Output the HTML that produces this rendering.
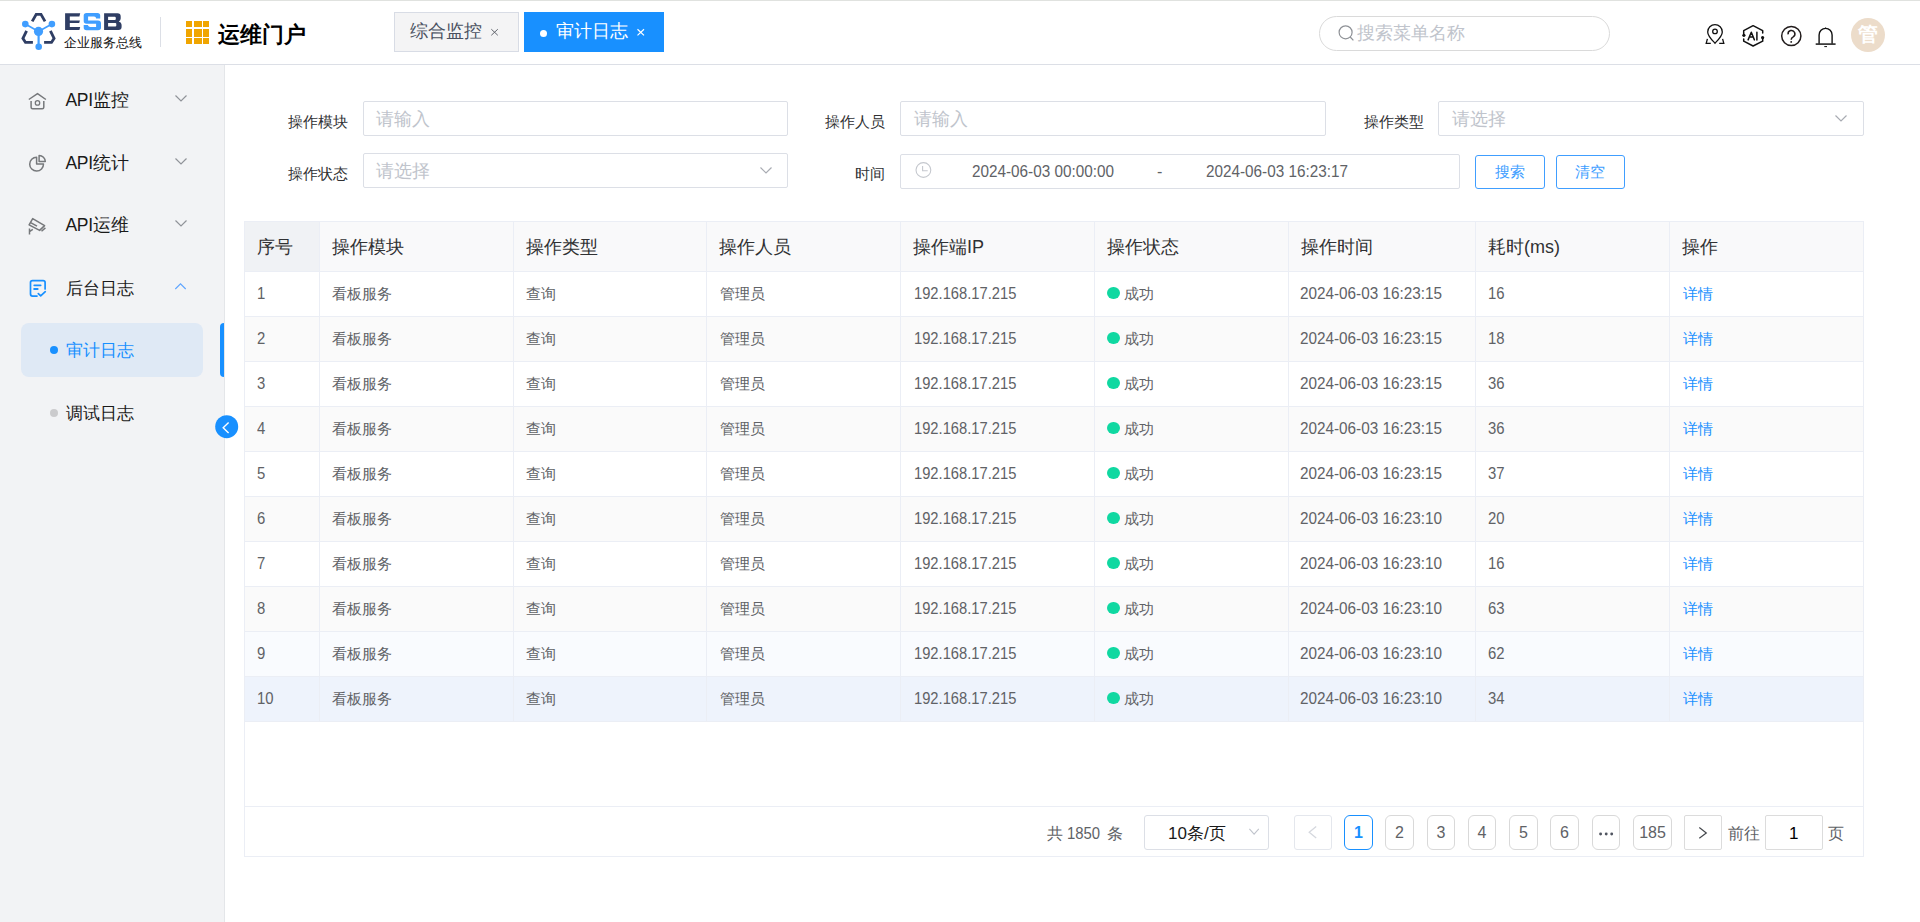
<!DOCTYPE html><html><head><meta charset="utf-8"><style>
*{box-sizing:border-box;margin:0;padding:0}
html,body{width:1920px;height:922px;overflow:hidden;background:#fff;font-family:"Liberation Sans",sans-serif;color:#303133}
.a{position:absolute}
.t{position:absolute;white-space:nowrap;line-height:1}
#hdr{position:absolute;left:0;top:0;width:1920px;height:65px;background:#fff;border-top:1px solid #e0e2df;border-bottom:1px solid #dcdfe6}
#side{position:absolute;left:0;top:65px;width:225px;height:857px;background:#f2f3f5;border-right:1px solid #e4e6e9}
.tab{position:absolute;top:12px;height:40px}
.inp{position:absolute;border:1px solid #dcdfe6;border-radius:2px;background:#fff}
.ph{color:#c0c4cc;font-size:18px}
.lbl{font-size:15px;color:#303133}
.cell{position:absolute;white-space:nowrap;line-height:1;font-size:15px;color:#606266}
.hcell{position:absolute;white-space:nowrap;line-height:1;font-size:18px;color:#303133}
.num{font-size:16px;transform-origin:0 0}
.pg{position:absolute;top:815px;height:35px;border:1px solid #dcdfe6;border-radius:4px;background:#fff;font-size:16px;color:#606266;text-align:center;line-height:33px}
</style></head><body>
<div id="hdr"></div>
<svg class="a" style="left:0px;top:0px" width="130" height="60" viewBox="0 0 130 60">
<g fill="none" stroke="#2f3e64" stroke-width="2.8" stroke-linejoin="miter" stroke-linecap="butt">
<polyline points="32.2,21.4 36.2,14.4 41,14.4 45,21.4"/>
<polyline points="26.6,30.8 22.9,38.3 25.5,42.4 32.9,42.4"/>
<polyline points="50.4,30.8 54.1,38.3 51.5,42.4 44.1,42.4"/>
</g>
<g stroke="#409eff" stroke-width="1.7"><line x1="25.3" y1="24.1" x2="38.5" y2="31.4"/><line x1="51.9" y1="24.1" x2="38.5" y2="31.4"/></g>
<line x1="38.6" y1="31.4" x2="38.6" y2="46.6" stroke="#409eff" stroke-width="2.2"/>
<g fill="#409eff"><circle cx="25.3" cy="24.1" r="3.3"/><circle cx="51.9" cy="24.1" r="3.3"/><circle cx="38.5" cy="31.4" r="4.6"/><circle cx="38.7" cy="46.7" r="3.3"/></g>
<path fill="#2f3e64" d="M65.1,13.3 L80.2,13.3 L79.4,16.6 L69.8,16.6 L69.8,20.4 L79.9,20.4 L79.2,22.9 L69.8,22.9 L69.8,27 L80.2,27 L79.4,29.9 L65.1,29.9 Z"/>
<path fill="#409eff" d="M86.5,12.9 L97.5,12.9 Q100.2,12.9 100.2,15.5 L100.2,18.6 L96.1,18.6 Q96.1,16.6 94,16.6 L88.1,16.6 L88.1,20.4 L98,20.4 Q101,20.4 101,23.5 L101,27.5 Q101,30.2 98,30.2 L86.5,30.2 Q83.7,30.2 83.7,27.5 L83.7,25.1 L87.8,25.1 Q88.3,26.9 90,26.9 L96.1,26.9 L96.1,23.7 L86.5,23.7 Q83.7,23.7 83.7,21 L83.7,15.5 Q83.7,12.9 86.5,12.9 Z"/>
<path fill="#2f3e64" fill-rule="evenodd" d="M104.1,13.3 L117.5,13.3 Q120.7,13.3 120.7,16.5 L120.7,18.5 Q120.7,20.5 118.8,21.4 Q121.6,22.3 121.6,24.8 L121.6,26.9 Q121.6,29.9 118.5,29.9 L104.1,29.9 Z M108.1,16.75 L114.8,16.75 Q115.8,16.75 115.8,17.9 L115.8,18.9 Q115.8,20 114.8,20 L108.1,20 Z M108.1,22.95 L115.3,22.95 Q116.3,22.95 116.3,24.1 L116.3,25.5 Q116.3,26.6 115.3,26.6 L108.1,26.6 Z"/>
</svg>
<div class="t" style="left:64px;top:35.5px;font-size:13.2px;font-weight:500;color:#111">企业服务总线</div>
<div class="a" style="left:160px;top:17px;width:1px;height:30px;background:#dcdfe6"></div>
<div class="a" style="left:186px;top:21px;width:6px;height:6px;background:#f0a500"></div>
<div class="a" style="left:186px;top:29px;width:6px;height:7.5px;background:#f0a500"></div>
<div class="a" style="left:186px;top:38px;width:6px;height:6px;background:#f0a500"></div>
<div class="a" style="left:194px;top:21px;width:8px;height:6px;background:#f0a500"></div>
<div class="a" style="left:194px;top:29px;width:8px;height:7.5px;background:#f0a500"></div>
<div class="a" style="left:194px;top:38px;width:8px;height:6px;background:#f0a500"></div>
<div class="a" style="left:203px;top:21px;width:6px;height:6px;background:#f0a500"></div>
<div class="a" style="left:203px;top:29px;width:6px;height:7.5px;background:#f0a500"></div>
<div class="a" style="left:203px;top:38px;width:6px;height:6px;background:#f0a500"></div>
<div class="t" style="left:218px;top:23.5px;font-size:22.3px;font-weight:bold;color:#000">运维门户</div>
<div class="tab" style="left:394px;width:125px;background:#f4f4f5;border:1px solid #d8dce5"></div>
<div class="t" style="left:410px;top:22.5px;font-size:17.5px;color:#495060">综合监控</div>
<svg class="a" style="left:488px;top:26px" width="14" height="12" viewBox="488 26 14 12"><path d="M491.3,29.2 L497.8,35.3 M497.8,29.2 L491.3,35.3" stroke="#5a5e66" stroke-width="0.95"/></svg>
<div class="tab" style="left:524px;width:140px;background:#1890ff"></div>
<div class="a" style="left:539.7px;top:29.6px;width:7.6px;height:7.6px;border-radius:50%;background:#fff"></div>
<div class="t" style="left:556px;top:22.5px;font-size:17.5px;color:#fff">审计日志</div>
<svg class="a" style="left:634px;top:26px" width="14" height="12" viewBox="634 26 14 12"><path d="M637.5,29.2 L644,35.4 M644,29.2 L637.5,35.4" stroke="#fff" stroke-width="1.2"/></svg>
<div class="a" style="left:1319px;top:16px;width:291px;height:35px;border:1px solid #dadada;border-radius:18px"></div>
<svg class="a" style="left:1336px;top:23px" width="20" height="20" viewBox="1336 23 20 20"><circle cx="1345.6" cy="32.3" r="6.5" fill="none" stroke="#8e9196" stroke-width="1.2"/><line x1="1350.2" y1="37" x2="1353.4" y2="40.4" stroke="#8e9196" stroke-width="1.2"/></svg>
<div class="t" style="left:1357px;top:24.5px;font-size:17.5px;color:#c0c4cc">搜索菜单名称</div>
<svg class="a" style="left:1700px;top:20px" width="140" height="32" viewBox="1700 20 140 32">
<g fill="none" stroke="#111" stroke-width="1.3">
<path d="M1715,43.2 C1711.5,39.5 1707.7,35.8 1707.7,31.9 A7.3,7.3 0 0 1 1722.3,31.9 C1722.3,35.8 1718.5,39.5 1715,43.2 Z"/>
<circle cx="1715" cy="31.4" r="2.3"/>
<polyline points="1707.4,38.9 1706.2,43.3 1710.8,43.3"/><polyline points="1722.6,38.9 1723.8,43.3 1719.2,43.3"/>
</g>
<g fill="none" stroke="#111" stroke-width="1.5" stroke-linejoin="round" stroke-linecap="round">
<path d="M1743.7,34.3 L1743.7,30.7 L1753.1,25.7 L1762.7,30.7 L1762.7,33"/>
<path d="M1743.7,38.9 L1743.7,41.2 L1753.1,46 L1762.7,41.2 L1762.7,37.6"/>
<path d="M1748.1,39.9 L1751.3,32.3 L1754.4,39.9 M1749.3,37 L1753.3,37 M1756.9,32.2 L1756.9,39.9"/>
</g>
<circle cx="1743.9" cy="35.3" r="1.6" fill="#111"/><circle cx="1762.6" cy="37.6" r="1.6" fill="#111"/>
<circle cx="1791.3" cy="36" r="9.6" fill="none" stroke="#221c1c" stroke-width="1.5"/>
<path d="M1788.1,34.3 A3.4,3.4 0 1 1 1793.2,36.8 C1791.7,37.6 1791.2,38.2 1791.2,39.7" fill="none" stroke="#221c1c" stroke-width="1.5"/>
<circle cx="1791.2" cy="41.9" r="0.95" fill="#221c1c"/>
<g fill="none" stroke="#111" stroke-width="1.4">
<path d="M1819.1,44 L1819.1,34.9 A6.5,6.5 0 0 1 1832.1,34.9 L1832.1,44"/>
</g>
<line x1="1815.7" y1="44.1" x2="1835.6" y2="44.1" stroke="#333" stroke-width="1.7"/>
<line x1="1824.3" y1="46.6" x2="1827" y2="46.6" stroke="#111" stroke-width="1"/>
<path d="M1824.5,28.6 L1825.6,27.3 L1826.7,28.6 Z" fill="#111"/>
</svg>
<div class="a" style="left:1851px;top:18px;width:34px;height:34px;border-radius:50%;background:#ecdcca"></div>
<div class="t" style="left:1858px;top:23.5px;font-size:20px;font-weight:900;color:#fff">管</div>
<div id="side"></div>
<div class="t" style="left:65.5px;top:91.7px;font-size:17.5px;color:#1a1a1a"><span style="letter-spacing:-0.3px">API</span>监控</div>
<div class="t" style="left:65.5px;top:154.7px;font-size:17.5px;color:#1a1a1a"><span style="letter-spacing:-0.3px">API</span>统计</div>
<div class="t" style="left:65.5px;top:216.7px;font-size:17.5px;color:#1a1a1a"><span style="letter-spacing:-0.3px">API</span>运维</div>
<div class="t" style="left:65.5px;top:279.7px;font-size:17.2px;color:#1a1a1a">后台日志</div>
<svg class="a" style="left:20px;top:84px" width="34" height="220" viewBox="20 84 34 220">
<g fill="none" stroke="#76787b" stroke-width="1.5" stroke-linejoin="round">
<path d="M28.8,99.5 L37.5,93.6 L45.9,99.5"/>
<path d="M31.1,101 L31.1,107.3 Q31.1,108.8 32.6,108.8 L42.3,108.8 Q43.8,108.8 43.8,107.3 L43.8,101"/>
<circle cx="37.5" cy="102.9" r="2.2" stroke-width="1.3"/>
<path d="M36.6,157.2 A6.9,6.9 0 1 0 43.5,164 L36.6,164 Z"/>
<path d="M39.1,155.4 L39.1,161.5 L45.3,161.5 A6.2,6.2 0 0 0 39.1,155.4 Z"/>
<path d="M32.7,218.6 L44.6,225.6 L39.6,230.4 L29.1,224.8 Z"/>
<path d="M30.6,222.6 L37,226.2"/>
<path d="M41.5,231.3 L45.4,227.9"/>
<path d="M29.5,228.4 L29.5,234.5 M29.5,231.6 L32.8,229.4"/>
</g>
<g fill="none" stroke="#1890ff" stroke-width="1.7" stroke-linecap="round" stroke-linejoin="round">
<path d="M37,296.1 L32.5,296.1 Q30.5,296.1 30.5,294.1 L30.5,282.6 Q30.5,280.6 32.5,280.6 L43.1,280.6 Q45.1,280.6 45.1,282.6 L45.1,288.9"/>
<path d="M34.2,285.3 L40.7,285.3"/>
<path d="M34.2,288.9 L37.6,288.9" stroke-width="2"/>
<path d="M38.3,293.6 L40.7,295.9 L45.3,291.7"/>
</g>
</svg>
<svg class="a" style="left:174px;top:94px" width="14" height="9" viewBox="0 0 14 9"><polyline points="1.5,1.5 7,7 12.5,1.5" fill="none" stroke="#909399" stroke-width="1.2"/></svg>
<svg class="a" style="left:174px;top:157px" width="14" height="9" viewBox="0 0 14 9"><polyline points="1.5,1.5 7,7 12.5,1.5" fill="none" stroke="#909399" stroke-width="1.2"/></svg>
<svg class="a" style="left:174px;top:219px" width="14" height="9" viewBox="0 0 14 9"><polyline points="1.5,1.5 7,7 12.5,1.5" fill="none" stroke="#909399" stroke-width="1.2"/></svg>
<svg class="a" style="left:172px;top:280px" width="16" height="12" viewBox="172 280 16 12"><polyline points="175.3,289 180.5,283.8 185.7,289" fill="none" stroke="#5ea5ff" stroke-width="1.1"/></svg>
<div class="a" style="left:21px;top:323px;width:182px;height:54px;border-radius:8px;background:#dfe9f5"></div>
<div class="a" style="left:220px;top:323px;width:4px;height:54px;border-radius:4px 0 0 4px;background:#1890ff"></div>
<div class="a" style="left:49.8px;top:345.9px;width:8.4px;height:8.4px;border-radius:50%;background:#1890ff"></div>
<div class="t" style="left:65.5px;top:341.8px;font-size:17.2px;color:#1890ff">审计日志</div>
<div class="a" style="left:49.8px;top:408.6px;width:8.4px;height:8.4px;border-radius:50%;background:#cbcbcd"></div>
<div class="t" style="left:65.5px;top:404.8px;font-size:17.2px;color:#1a1a1a">调试日志</div>
<svg class="a" style="left:214px;top:414px" width="26" height="26" viewBox="214 414 26 26"><circle cx="226.7" cy="426.7" r="11.5" fill="#1890ff"/><polyline points="228.6,422.6 223.2,427.8 228.6,432.9" fill="none" stroke="#fff" stroke-width="1.4"/></svg>
<div class="t lbl" style="left:288px;top:114px">操作模块</div>
<div class="t lbl" style="left:825px;top:114px">操作人员</div>
<div class="t lbl" style="left:1364px;top:114px">操作类型</div>
<div class="t lbl" style="left:288px;top:166px">操作状态</div>
<div class="t lbl" style="left:855px;top:166px">时间</div>
<div class="inp" style="left:363px;top:101px;width:425px;height:35px"></div>
<div class="t ph" style="left:376px;top:110px">请输入</div>
<div class="inp" style="left:900px;top:101px;width:426px;height:35px"></div>
<div class="t ph" style="left:914px;top:110px">请输入</div>
<div class="inp" style="left:1438px;top:101px;width:426px;height:35px"></div>
<div class="t ph" style="left:1452px;top:110px">请选择</div>
<svg class="a" style="left:1834px;top:114px" width="14" height="9" viewBox="0 0 14 9"><polyline points="1.5,1.5 7,7 12.5,1.5" fill="none" stroke="#a8abb2" stroke-width="1.2"/></svg>
<div class="inp" style="left:363px;top:153px;width:425px;height:35px"></div>
<div class="t ph" style="left:376px;top:162px">请选择</div>
<svg class="a" style="left:759px;top:166px" width="14" height="9" viewBox="0 0 14 9"><polyline points="1.5,1.5 7,7 12.5,1.5" fill="none" stroke="#a8abb2" stroke-width="1.2"/></svg>
<div class="inp" style="left:900px;top:154px;width:560px;height:35px"></div>
<svg class="a" style="left:912px;top:159px" width="22" height="22" viewBox="912 159 22 22"><circle cx="923.4" cy="170" r="7.4" fill="none" stroke="#c5c8ce" stroke-width="1.1"/><polyline points="922.6,166 922.6,170.8 927.7,170.8" fill="none" stroke="#c5c8ce" stroke-width="1.1"/></svg>
<div class="t num" style="left:972px;top:163.8px;color:#606266;transform:scaleX(0.955)">2024-06-03 00:00:00</div>
<div class="t num" style="left:1157px;top:163.8px;color:#606266">-</div>
<div class="t num" style="left:1206px;top:163.8px;color:#606266;transform:scaleX(0.955)">2024-06-03 16:23:17</div>
<div class="a" style="left:1475px;top:155px;width:70px;height:34px;border:1px solid #409eff;border-radius:3px"></div>
<div class="t" style="left:1495px;top:164px;font-size:15px;color:#409eff">搜索</div>
<div class="a" style="left:1556px;top:155px;width:69px;height:34px;border:1px solid #409eff;border-radius:3px"></div>
<div class="t" style="left:1575px;top:164px;font-size:15px;color:#409eff">清空</div>
<div class="a" style="left:244px;top:221px;width:1620px;height:636px;border:1px solid #ebeef5;background:#fff"></div>
<div class="a" style="left:245px;top:222px;width:1618px;height:49px;background:#f9f9fa"></div>
<div class="a" style="left:245px;top:222px;width:74px;height:49px;background:#f0f2f5"></div>
<div class="a" style="left:245px;top:271px;width:1618px;height:45px;background:#fff;border-top:1px solid #ebeef5"></div>
<div class="a" style="left:245px;top:316px;width:1618px;height:45px;background:#fafafa;border-top:1px solid #ebeef5"></div>
<div class="a" style="left:245px;top:361px;width:1618px;height:45px;background:#fff;border-top:1px solid #ebeef5"></div>
<div class="a" style="left:245px;top:406px;width:1618px;height:45px;background:#fafafa;border-top:1px solid #ebeef5"></div>
<div class="a" style="left:245px;top:451px;width:1618px;height:45px;background:#fff;border-top:1px solid #ebeef5"></div>
<div class="a" style="left:245px;top:496px;width:1618px;height:45px;background:#fafafa;border-top:1px solid #ebeef5"></div>
<div class="a" style="left:245px;top:541px;width:1618px;height:45px;background:#fff;border-top:1px solid #ebeef5"></div>
<div class="a" style="left:245px;top:586px;width:1618px;height:45px;background:#fafafa;border-top:1px solid #ebeef5"></div>
<div class="a" style="left:245px;top:631px;width:1618px;height:45px;background:#f9fbfe;border-top:1px solid #ebeef5"></div>
<div class="a" style="left:245px;top:676px;width:1618px;height:45px;background:#eef3fc;border-top:1px solid #ebeef5"></div>
<div class="a" style="left:245px;top:721px;width:1618px;height:1px;background:#ebeef5"></div>
<div class="a" style="left:319px;top:222px;width:1px;height:499px;background:#ebeef5"></div>
<div class="a" style="left:513px;top:222px;width:1px;height:499px;background:#ebeef5"></div>
<div class="a" style="left:706px;top:222px;width:1px;height:499px;background:#ebeef5"></div>
<div class="a" style="left:900px;top:222px;width:1px;height:499px;background:#ebeef5"></div>
<div class="a" style="left:1094px;top:222px;width:1px;height:499px;background:#ebeef5"></div>
<div class="a" style="left:1288px;top:222px;width:1px;height:499px;background:#ebeef5"></div>
<div class="a" style="left:1475px;top:222px;width:1px;height:499px;background:#ebeef5"></div>
<div class="a" style="left:1669px;top:222px;width:1px;height:499px;background:#ebeef5"></div>
<div class="a" style="left:245px;top:806px;width:1618px;height:1px;background:#ebeef5"></div>
<div class="hcell" style="left:257px;top:238px">序号</div>
<div class="hcell" style="left:332px;top:238px">操作模块</div>
<div class="hcell" style="left:526px;top:238px">操作类型</div>
<div class="hcell" style="left:719px;top:238px">操作人员</div>
<div class="hcell" style="left:913px;top:238px">操作端IP</div>
<div class="hcell" style="left:1107px;top:238px">操作状态</div>
<div class="hcell" style="left:1301px;top:238px">操作时间</div>
<div class="hcell" style="left:1488px;top:238px">耗时(ms)</div>
<div class="hcell" style="left:1682px;top:238px">操作</div>
<div class="cell num" style="left:257px;top:285.7px;transform:scaleX(0.93)">1</div>
<div class="cell" style="left:332px;top:285.7px">看板服务</div>
<div class="cell" style="left:526px;top:285.7px">查询</div>
<div class="cell" style="left:720px;top:285.7px">管理员</div>
<div class="cell num" style="left:914px;top:285.7px;transform:scaleX(0.92)">192.168.17.215</div>
<div class="a" style="left:1107px;top:286.7px;width:13px;height:12.5px;border-radius:50%;background:#10d8a1"></div>
<div class="cell" style="left:1124px;top:285.7px">成功</div>
<div class="cell num" style="left:1300px;top:285.7px;transform:scaleX(0.955)">2024-06-03 16:23:15</div>
<div class="cell num" style="left:1488px;top:285.7px;transform:scaleX(0.93)">16</div>
<div class="cell" style="left:1683px;top:285.7px;color:#1890ff">详情</div>
<div class="cell num" style="left:257px;top:330.7px;transform:scaleX(0.93)">2</div>
<div class="cell" style="left:332px;top:330.7px">看板服务</div>
<div class="cell" style="left:526px;top:330.7px">查询</div>
<div class="cell" style="left:720px;top:330.7px">管理员</div>
<div class="cell num" style="left:914px;top:330.7px;transform:scaleX(0.92)">192.168.17.215</div>
<div class="a" style="left:1107px;top:331.7px;width:13px;height:12.5px;border-radius:50%;background:#10d8a1"></div>
<div class="cell" style="left:1124px;top:330.7px">成功</div>
<div class="cell num" style="left:1300px;top:330.7px;transform:scaleX(0.955)">2024-06-03 16:23:15</div>
<div class="cell num" style="left:1488px;top:330.7px;transform:scaleX(0.93)">18</div>
<div class="cell" style="left:1683px;top:330.7px;color:#1890ff">详情</div>
<div class="cell num" style="left:257px;top:375.7px;transform:scaleX(0.93)">3</div>
<div class="cell" style="left:332px;top:375.7px">看板服务</div>
<div class="cell" style="left:526px;top:375.7px">查询</div>
<div class="cell" style="left:720px;top:375.7px">管理员</div>
<div class="cell num" style="left:914px;top:375.7px;transform:scaleX(0.92)">192.168.17.215</div>
<div class="a" style="left:1107px;top:376.7px;width:13px;height:12.5px;border-radius:50%;background:#10d8a1"></div>
<div class="cell" style="left:1124px;top:375.7px">成功</div>
<div class="cell num" style="left:1300px;top:375.7px;transform:scaleX(0.955)">2024-06-03 16:23:15</div>
<div class="cell num" style="left:1488px;top:375.7px;transform:scaleX(0.93)">36</div>
<div class="cell" style="left:1683px;top:375.7px;color:#1890ff">详情</div>
<div class="cell num" style="left:257px;top:420.7px;transform:scaleX(0.93)">4</div>
<div class="cell" style="left:332px;top:420.7px">看板服务</div>
<div class="cell" style="left:526px;top:420.7px">查询</div>
<div class="cell" style="left:720px;top:420.7px">管理员</div>
<div class="cell num" style="left:914px;top:420.7px;transform:scaleX(0.92)">192.168.17.215</div>
<div class="a" style="left:1107px;top:421.7px;width:13px;height:12.5px;border-radius:50%;background:#10d8a1"></div>
<div class="cell" style="left:1124px;top:420.7px">成功</div>
<div class="cell num" style="left:1300px;top:420.7px;transform:scaleX(0.955)">2024-06-03 16:23:15</div>
<div class="cell num" style="left:1488px;top:420.7px;transform:scaleX(0.93)">36</div>
<div class="cell" style="left:1683px;top:420.7px;color:#1890ff">详情</div>
<div class="cell num" style="left:257px;top:465.7px;transform:scaleX(0.93)">5</div>
<div class="cell" style="left:332px;top:465.7px">看板服务</div>
<div class="cell" style="left:526px;top:465.7px">查询</div>
<div class="cell" style="left:720px;top:465.7px">管理员</div>
<div class="cell num" style="left:914px;top:465.7px;transform:scaleX(0.92)">192.168.17.215</div>
<div class="a" style="left:1107px;top:466.7px;width:13px;height:12.5px;border-radius:50%;background:#10d8a1"></div>
<div class="cell" style="left:1124px;top:465.7px">成功</div>
<div class="cell num" style="left:1300px;top:465.7px;transform:scaleX(0.955)">2024-06-03 16:23:15</div>
<div class="cell num" style="left:1488px;top:465.7px;transform:scaleX(0.93)">37</div>
<div class="cell" style="left:1683px;top:465.7px;color:#1890ff">详情</div>
<div class="cell num" style="left:257px;top:510.7px;transform:scaleX(0.93)">6</div>
<div class="cell" style="left:332px;top:510.7px">看板服务</div>
<div class="cell" style="left:526px;top:510.7px">查询</div>
<div class="cell" style="left:720px;top:510.7px">管理员</div>
<div class="cell num" style="left:914px;top:510.7px;transform:scaleX(0.92)">192.168.17.215</div>
<div class="a" style="left:1107px;top:511.7px;width:13px;height:12.5px;border-radius:50%;background:#10d8a1"></div>
<div class="cell" style="left:1124px;top:510.7px">成功</div>
<div class="cell num" style="left:1300px;top:510.7px;transform:scaleX(0.955)">2024-06-03 16:23:10</div>
<div class="cell num" style="left:1488px;top:510.7px;transform:scaleX(0.93)">20</div>
<div class="cell" style="left:1683px;top:510.7px;color:#1890ff">详情</div>
<div class="cell num" style="left:257px;top:555.7px;transform:scaleX(0.93)">7</div>
<div class="cell" style="left:332px;top:555.7px">看板服务</div>
<div class="cell" style="left:526px;top:555.7px">查询</div>
<div class="cell" style="left:720px;top:555.7px">管理员</div>
<div class="cell num" style="left:914px;top:555.7px;transform:scaleX(0.92)">192.168.17.215</div>
<div class="a" style="left:1107px;top:556.7px;width:13px;height:12.5px;border-radius:50%;background:#10d8a1"></div>
<div class="cell" style="left:1124px;top:555.7px">成功</div>
<div class="cell num" style="left:1300px;top:555.7px;transform:scaleX(0.955)">2024-06-03 16:23:10</div>
<div class="cell num" style="left:1488px;top:555.7px;transform:scaleX(0.93)">16</div>
<div class="cell" style="left:1683px;top:555.7px;color:#1890ff">详情</div>
<div class="cell num" style="left:257px;top:600.7px;transform:scaleX(0.93)">8</div>
<div class="cell" style="left:332px;top:600.7px">看板服务</div>
<div class="cell" style="left:526px;top:600.7px">查询</div>
<div class="cell" style="left:720px;top:600.7px">管理员</div>
<div class="cell num" style="left:914px;top:600.7px;transform:scaleX(0.92)">192.168.17.215</div>
<div class="a" style="left:1107px;top:601.7px;width:13px;height:12.5px;border-radius:50%;background:#10d8a1"></div>
<div class="cell" style="left:1124px;top:600.7px">成功</div>
<div class="cell num" style="left:1300px;top:600.7px;transform:scaleX(0.955)">2024-06-03 16:23:10</div>
<div class="cell num" style="left:1488px;top:600.7px;transform:scaleX(0.93)">63</div>
<div class="cell" style="left:1683px;top:600.7px;color:#1890ff">详情</div>
<div class="cell num" style="left:257px;top:645.7px;transform:scaleX(0.93)">9</div>
<div class="cell" style="left:332px;top:645.7px">看板服务</div>
<div class="cell" style="left:526px;top:645.7px">查询</div>
<div class="cell" style="left:720px;top:645.7px">管理员</div>
<div class="cell num" style="left:914px;top:645.7px;transform:scaleX(0.92)">192.168.17.215</div>
<div class="a" style="left:1107px;top:646.7px;width:13px;height:12.5px;border-radius:50%;background:#10d8a1"></div>
<div class="cell" style="left:1124px;top:645.7px">成功</div>
<div class="cell num" style="left:1300px;top:645.7px;transform:scaleX(0.955)">2024-06-03 16:23:10</div>
<div class="cell num" style="left:1488px;top:645.7px;transform:scaleX(0.93)">62</div>
<div class="cell" style="left:1683px;top:645.7px;color:#1890ff">详情</div>
<div class="cell num" style="left:257px;top:690.7px;transform:scaleX(0.93)">10</div>
<div class="cell" style="left:332px;top:690.7px">看板服务</div>
<div class="cell" style="left:526px;top:690.7px">查询</div>
<div class="cell" style="left:720px;top:690.7px">管理员</div>
<div class="cell num" style="left:914px;top:690.7px;transform:scaleX(0.92)">192.168.17.215</div>
<div class="a" style="left:1107px;top:691.7px;width:13px;height:12.5px;border-radius:50%;background:#10d8a1"></div>
<div class="cell" style="left:1124px;top:690.7px">成功</div>
<div class="cell num" style="left:1300px;top:690.7px;transform:scaleX(0.955)">2024-06-03 16:23:10</div>
<div class="cell num" style="left:1488px;top:690.7px;transform:scaleX(0.93)">34</div>
<div class="cell" style="left:1683px;top:690.7px;color:#1890ff">详情</div>
<div class="t" style="left:1047px;top:826px;font-size:16px;color:#606266">共 <span class="num" style="display:inline-block;transform:scaleX(0.93)">1850</span> 条</div>
<div class="a" style="left:1144px;top:815px;width:125px;height:35px;border:1px solid #dcdfe6;border-radius:3px"></div>
<div class="t" style="left:1168px;top:825px;font-size:17px;color:#1a1a1a">10条/页</div>
<svg class="a" style="left:1246px;top:826px" width="16" height="12" viewBox="1246 826 16 12"><polyline points="1249.4,828.8 1254.1,834.2 1258.8,828.8" fill="none" stroke="#c0c4cc" stroke-width="1.1"/></svg>
<div class="pg" style="left:1294px;width:38px;border-color:#e4e7ed;border-radius:3px"></div>
<svg class="a" style="left:1304px;top:824px" width="16" height="18" viewBox="1304 824 16 18"><polyline points="1316.2,826.4 1309.2,832.3 1316.2,838.1" fill="none" stroke="#d5d8de" stroke-width="1.3"/></svg>
<div class="pg" style="left:1344px;width:29px;border-color:#1890ff;color:#1890ff;font-weight:bold;border-radius:6px">1</div>
<div class="pg" style="left:1385px;width:29px;border-color:#d9d9d9;border-radius:6px"><span class="num" style="display:inline-block">2</span></div>
<div class="pg" style="left:1427px;width:28px;border-color:#d9d9d9;border-radius:6px"><span class="num" style="display:inline-block">3</span></div>
<div class="pg" style="left:1468px;width:28px;border-color:#d9d9d9;border-radius:6px"><span class="num" style="display:inline-block">4</span></div>
<div class="pg" style="left:1509px;width:29px;border-color:#d9d9d9;border-radius:6px"><span class="num" style="display:inline-block">5</span></div>
<div class="pg" style="left:1550px;width:29px;border-color:#d9d9d9;border-radius:6px"><span class="num" style="display:inline-block">6</span></div>
<div class="pg" style="left:1592px;width:28px;border-color:#d9d9d9;border-radius:6px"></div>
<svg class="a" style="left:1596px;top:830px" width="20" height="8" viewBox="1596 830 20 8"><g fill="#505560"><circle cx="1600.6" cy="834" r="1.45"/><circle cx="1606.2" cy="834" r="1.45"/><circle cx="1611.7" cy="834" r="1.45"/></g></svg>
<div class="pg" style="left:1633px;width:39px;border-color:#d9d9d9;border-radius:6px"><span class="num" style="display:inline-block">185</span></div>
<div class="pg" style="left:1684px;width:38px;border-color:#dcdcdc;border-radius:2px"></div>
<svg class="a" style="left:1694px;top:824px" width="16" height="18" viewBox="1694 824 16 18"><polyline points="1699.3,827.6 1706.3,832.9 1699.3,838.2" fill="none" stroke="#45484d" stroke-width="1.2"/></svg>
<div class="t" style="left:1728px;top:826px;font-size:16px;color:#606266">前往</div>
<div class="a" style="left:1765px;top:815px;width:58px;height:35px;border:1px solid #dcdcdc;border-radius:2px"></div>
<div class="t" style="left:1789px;top:825px;font-size:17px;color:#000">1</div>
<div class="t" style="left:1828px;top:826px;font-size:16px;color:#606266">页</div>
</body></html>
